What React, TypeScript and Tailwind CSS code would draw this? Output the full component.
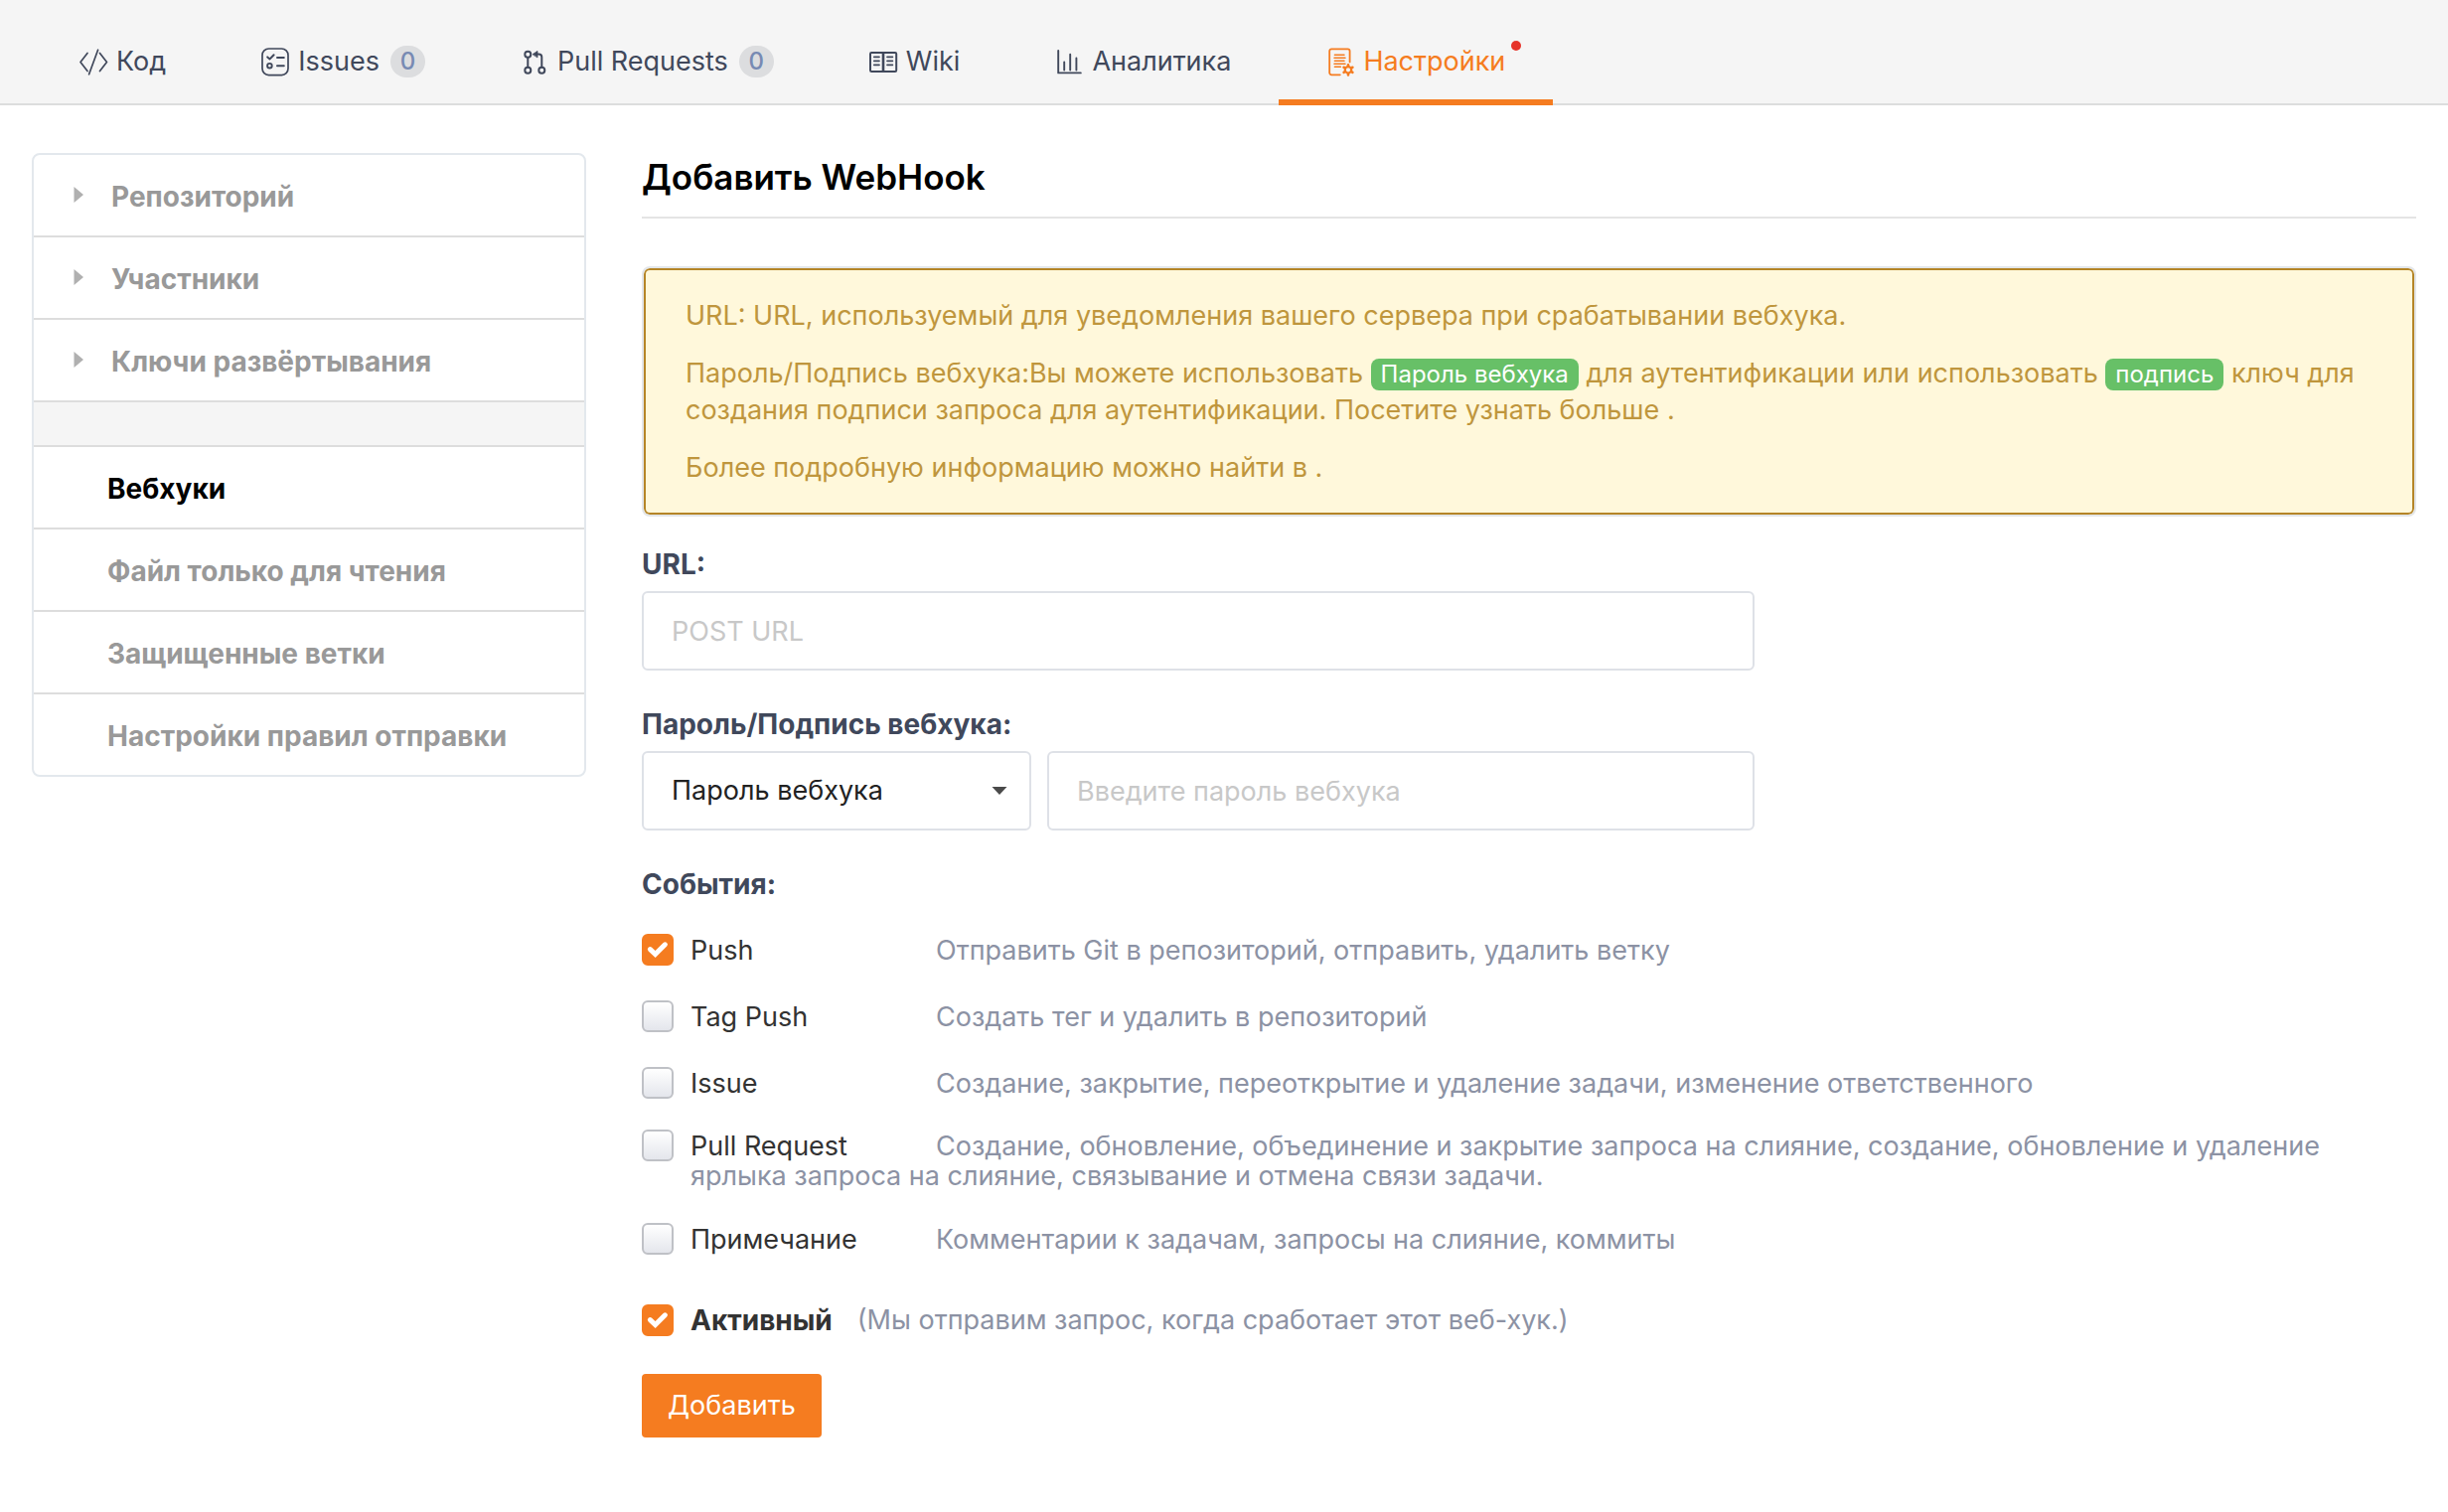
import React from "react";
import type { ReactNode } from "react";

function Icon({ children }: { children: ReactNode }) {
  return (
    <svg
      viewBox="0 0 28 28"
      className="h-7 w-7 shrink-0 overflow-visible"
      fill="none"
      stroke="currentColor"
      strokeWidth="1.7"
      strokeLinecap="round"
      strokeLinejoin="round"
      aria-hidden="true"
    >
      {children}
    </svg>
  );
}

const CodeIcon = () => (
  <Icon>
    <path d="M8 5.5 1 14.5 8 23.5M20.5 5.5 27.5 14.5 20.5 23.5M18.6 2.2 9.6 26.8" />
  </Icon>
);

const IssuesIcon = () => (
  <Icon>
    <rect x="1" y="1" width="26" height="26.6" rx="6.5" />
    <path d="M6.2 9.4 8.6 11.4 12.6 7.2M16 10h6.8M16 18.2h6.8" strokeWidth="2" />
    <circle cx="8.4" cy="18.2" r="2.3" strokeWidth="1.9" />
  </Icon>
);

const PullIcon = () => (
  <Icon>
    <g strokeWidth="2">
      <circle cx="7.3" cy="6.7" r="3" />
      <circle cx="7.3" cy="22.7" r="3" />
      <circle cx="21.3" cy="22.7" r="3" />
      <path d="M7.3 10v9.4M21.3 19.4V9.4a3 3 0 0 0-3-3h-2" />
    </g>
    <path d="M12.4 6.5 17 3.4v6.2z" fill="currentColor" strokeWidth="0.8" />
  </Icon>
);

const WikiIcon = () => (
  <Icon>
    <rect x="1" y="5" width="26.2" height="19" rx="1.2" strokeWidth="2" />
    <path d="M14 5v19" strokeWidth="2.6" strokeLinecap="butt" />
    <path d="M4.8 9.3H10M4.8 13.3H10M4.8 17.3H10M18 9.3h5.4M18 13.3h5.4M18 17.3h5.4" />
  </Icon>
);

const ChartIcon = () => (
  <Icon>
    <path d="M3.2 3v22.4h22.6M9.2 14.4v8.2M15.2 6.8v15.8M21.4 10.4v12.2" strokeWidth="1.9" />
  </Icon>
);

const SettingsIcon = () => (
  <Icon>
    <path d="M13.8 27.3H5.2a2 2 0 0 1-2-2V3.4a2 2 0 0 1 2-2h16.4a2 2 0 0 1 2 2V14.4" strokeWidth="1.8" />
    <path d="M8.4 7.2h9.6M8 10.3h11M8.4 13.3h9.6M8 16.3h11M8.4 19.3h6" strokeWidth="1.5" />
    <circle cx="22" cy="22.3" r="3.2" strokeWidth="2.2" />
    <path
      d="M22 17.2v.8M22 26.6v.8M17.6 19.75l.7.4M25.7 24.45l.7.4M17.6 24.85l.7-.4M25.7 20.15l.7-.4"
      strokeWidth="2.6"
    />
  </Icon>
);

const tabs = [
  { label: "Код", icon: <CodeIcon /> },
  { label: "Issues", icon: <IssuesIcon />, count: 0 },
  { label: "Pull Requests", icon: <PullIcon />, count: 0 },
  { label: "Wiki", icon: <WikiIcon /> },
  { label: "Аналитика", icon: <ChartIcon /> },
  { label: "Настройки", icon: <SettingsIcon />, active: true },
];

function Tabs() {
  return (
    <nav className="flex h-[106px] border-b-2 border-[#dcdddd] bg-[#f5f5f5] pl-8">
      {tabs.map((tab) => (
        <a
          key={tab.label}
          href="#"
          aria-current={tab.active ? "page" : undefined}
          className={
            tab.active
              ? "relative -mb-0.5 flex items-center gap-[9px] border-b-6 border-[#f57c20] px-12 pt-6 text-[#f57c20]"
              : "flex items-center gap-[9px] px-12 pt-5 text-[#40485b]"
          }
        >
          {tab.icon}
          <span>{tab.label}</span>
          {tab.count !== undefined && (
            <span className="ml-0.5 flex h-8 w-[35px] items-center justify-center rounded-full bg-[#dcdddf] text-2xl font-medium text-[#778ab3]">
              {tab.count}
            </span>
          )}
          {tab.active && <span className="absolute top-[41px] right-8 h-2.5 w-2.5 rounded-full bg-[#e63329]" />}
        </a>
      ))}
    </nav>
  );
}

const groups = ["Репозиторий", "Участники", "Ключи развёртывания"];
const pages = ["Вебхуки", "Файл только для чтения", "Защищенные ветки", "Настройки правил отправки"];

function Sidebar() {
  return (
    <aside className="w-[558px] shrink-0 overflow-hidden rounded-lg border-2 border-[#e3e8ed] text-[28px] font-bold text-[#999999]">
      {groups.map((name) => (
        <a key={name} href="#" className="flex h-[83px] items-center gap-7 border-b-2 border-[#dddddd] pt-0.5 pl-10">
          <svg viewBox="0 0 10 16" className="mb-1 h-4 w-2.5 fill-[#b0b0b0]" aria-hidden="true">
            <path d="M0.5 0 10 8 0.5 16z" />
          </svg>
          {name}
        </a>
      ))}
      <div className="h-[45px] border-b-2 border-[#dddddd] bg-[#f5f5f5]" />
      {pages.map((name, i) => (
        <a
          key={name}
          href="#"
          className={
            i === 0
              ? "flex h-[83px] items-center border-b-2 border-[#dddddd] pt-0.5 pl-[74px] text-black"
              : "flex h-[83px] items-center border-b-2 border-[#dddddd] pt-0.5 pl-[74px] last:h-[81px] last:border-b-0"
          }
        >
          {name}
        </a>
      ))}
    </aside>
  );
}

function Tag({ children }: { children: ReactNode }) {
  return (
    <span className="inline-block h-8 rounded-lg bg-[#67c067] px-2.5 align-baseline text-2xl leading-8 text-white">
      {children}
    </span>
  );
}

function Checkbox({ id, checked }: { id: string; checked?: boolean }) {
  return (
    <span className="grid h-8 w-8 shrink-0">
      <input
        id={id}
        type="checkbox"
        defaultChecked={checked}
        className="peer col-start-1 row-start-1 h-8 w-8 appearance-none rounded-md border-2 border-[#bfc1c6] bg-linear-to-b from-white to-[#e4e6ec] checked:border-[#f57c20] checked:bg-[#f57c20] checked:bg-none"
      />
      <svg
        viewBox="0 0 32 32"
        className="pointer-events-none invisible col-start-1 row-start-1 h-8 w-8 peer-checked:visible"
        fill="none"
        stroke="white"
        strokeWidth="5"
        strokeLinejoin="miter"
        aria-hidden="true"
      >
        <path d="M8.4 15.6 13.6 20.6 23.4 10.8" strokeLinecap="round" />
      </svg>
    </span>
  );
}

const events = [
  { id: "push", name: "Push", text: "Отправить Git в репозиторий, отправить, удалить ветку", checked: true },
  { id: "tag", name: "Tag Push", text: "Создать тег и удалить в репозиторий" },
  { id: "issue", name: "Issue", text: "Создание, закрытие, переоткрытие и удаление задачи, изменение ответственного" },
  {
    id: "pull",
    name: "Pull Request",
    text: "Создание, обновление, объединение и закрытие запроса на слияние, создание, обновление и удаление ярлыка запроса на слияние, связывание и отмена связи задачи.",
    long: true,
  },
  { id: "note", name: "Примечание", text: "Комментарии к задачам, запросы на слияние, коммиты" },
];

function WebhookForm() {
  return (
    <form className="text-[#8c92a4]" onSubmit={(e) => e.preventDefault()}>
      <label htmlFor="url" className="mt-[30px] mb-[9px] block text-[28px] leading-9 font-bold text-[#40485b]">
        URL:
      </label>
      <input
        id="url"
        type="text"
        placeholder="POST URL"
        className="block h-20 w-full max-w-[1120px] rounded-md border-2 border-[#dee1e7] px-7 placeholder:text-[#c8c8c8]"
      />

      <label htmlFor="secret" className="mt-9 mb-[9px] block text-[28px] leading-9 font-bold text-[#40485b]">
        Пароль/Подпись вебхука:
      </label>
      <div className="flex max-w-[1120px] gap-4">
        <div className="relative w-[392px] shrink-0">
          <select
            aria-label="Тип"
            className="h-20 w-full appearance-none rounded-md border-2 border-[#dee1e7] bg-white px-7 text-[#222222]"
          >
            <option>Пароль вебхука</option>
            <option>Подпись</option>
          </select>
          <svg
            viewBox="0 0 16 8"
            className="pointer-events-none absolute top-9 right-6 h-2 w-4 fill-[#4a4a4a]"
            aria-hidden="true"
          >
            <path d="M0.5 0h15L8 8z" />
          </svg>
        </div>
        <input
          id="secret"
          type="text"
          placeholder="Введите пароль вебхука"
          className="h-20 min-w-0 flex-1 rounded-md border-2 border-[#dee1e7] px-7 placeholder:text-[#c8c8c8]"
        />
      </div>

      <fieldset className="mt-9">
        <legend className="mb-[15px] text-[28px] leading-9 font-bold text-[#40485b]">События:</legend>
        {events.map((ev) => (
          <div
            key={ev.id}
            className={ev.long ? "flex gap-[17px] pt-[13px] pb-[15px]" : "flex gap-[17px] py-[17px]"}
          >
            <Checkbox id={ev.id} checked={ev.checked} />
            <p className={ev.long ? "pt-0.5 leading-[30px]" : "pt-px leading-8"}>
              <label htmlFor={ev.id} className="inline-block w-[247px] text-[#333333]">
                {ev.name}
              </label>
              {ev.text}
            </p>
          </div>
        ))}
      </fieldset>

      <div className="mt-8 flex gap-[17px] leading-8">
        <Checkbox id="active" checked />
        <label htmlFor="active" className="text-[28px] font-bold text-[#333333]">
          Активный
        </label>
        <span className="ml-2">(Мы отправим запрос, когда сработает этот веб-хук.)</span>
      </div>

      <button type="submit" className="mt-[38px] h-16 rounded-sm bg-[#f57c20] px-[26px] text-white">
        Добавить
      </button>
    </form>
  );
}

export default function App() {
  return (
    <div className="min-h-screen bg-white font-['Inter',sans-serif] text-[27px]">
      <Tabs />
      <div className="flex items-start gap-14 px-8 pt-12">
        <Sidebar />
        <main className="min-w-0 flex-1">
          <h1 className="h-[66px] border-b-2 border-[#e4e4e4] text-[35px] leading-[49px] font-semibold text-black">
            Добавить WebHook
          </h1>
          <section className="mt-12 rounded-lg border-2 border-[#e3e6e9] bg-[#fff8db] px-[42px] py-[29px] leading-[37px] text-[#bf963d] shadow-[inset_0_0_0_2px_#b58527]">
            <p>URL: URL, используемый для уведомления вашего сервера при срабатывании вебхука.</p>
            <p className="mt-[21px]">
              Пароль/Подпись вебхука:Вы можете использовать <Tag>Пароль вебхука</Tag> для аутентификации или
              использовать <Tag>подпись</Tag> ключ для создания подписи запроса для аутентификации. Посетите узнать
              больше .
            </p>
            <p className="mt-[21px]">Более подробную информацию можно найти в .</p>
          </section>
          <WebhookForm />
        </main>
      </div>
    </div>
  );
}
